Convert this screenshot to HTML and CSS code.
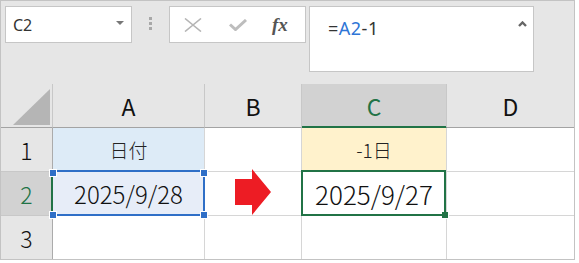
FILE: index.html
```html
<!DOCTYPE html>
<html lang="ja">
<head>
    <meta charset="UTF-8">
    <title>日付 -1日</title>
    <link rel="stylesheet" href="styles.css">
</head>
<body>
    <div class="sheet">
        <div class="toolbar">
            <div class="namebox">
                <span>C2</span>
                <svg class="drop" width="8" height="4" viewBox="0 0 8 4"><polygon points="0,0 8,0 4,4" fill="#777"/></svg>
            </div>
            <div class="grip"><i></i><i></i><i></i></div>
            <div class="fbuttons">
                <svg width="18" height="14" viewBox="0 0 18 14"><path d="M1 0.5 L17 13.5 M17 0.5 L1 13.5" stroke="#b5b5b5" stroke-width="1.6" fill="none"/></svg>
                <svg width="18" height="12" viewBox="0 0 18 12"><path d="M1 5.5 L6.5 10.5 L17 1" stroke="#bdbdbd" stroke-width="3" fill="none"/></svg>
                <span class="fx">fx</span>
            </div>
            <div class="formula">
                <span>=</span><span class="ref">A2</span><span>-1</span>
                <svg class="caret" width="9" height="6" viewBox="0 0 9 6"><path d="M1 5 L4.5 1.5 L8 5" stroke="#666" stroke-width="2.4" fill="none"/></svg>
            </div>
        </div>

        <div class="grid">
            <div class="corner">
                <svg width="37" height="36" viewBox="0 0 37 36"><polygon points="0,36 37,36 37,0" fill="#b5b5b5"/></svg>
            </div>
            <div class="colhead">A</div>
            <div class="colhead">B</div>
            <div class="colhead active">C</div>
            <div class="colhead last">D</div>

            <div class="rowhead">1</div>
            <div class="cell label-blue small">日付</div>
            <div class="cell"></div>
            <div class="cell label-yellow small">-1日</div>
            <div class="cell last"></div>

            <div class="rowhead active">2</div>
            <div class="cell source">2025/9/28<span class="sel-blue"><b class="h1"></b><b class="h2"></b><b class="h3"></b><b class="h4"></b></span></div>
            <div class="cell arrow">
                <svg width="36" height="46" viewBox="0 0 36 46"><polygon points="0,10 17,10 17,0 36,23 17,46 17,36 0,36" fill="#ed1c24"/></svg>
            </div>
            <div class="cell result">2025/9/27<span class="sel-green"><b></b></span></div>
            <div class="cell last"></div>

            <div class="rowhead bottom">3</div>
            <div class="cell bottom"></div>
            <div class="cell bottom"></div>
            <div class="cell bottom"></div>
            <div class="cell bottom last"></div>
        </div>
    </div>
</body>
</html>
```

FILE: styles.css
```css
* {
    box-sizing: border-box;
}
body {
    margin: 0;
    background: #fff;
    font-family: "Noto Sans CJK JP", "Noto Sans", sans-serif;
}
.sheet {
    width: 575px;
    height: 260px;
    border: 1px solid #c3c3c3;
    background: #e6e6e6;
}

/* barra de fórmulas */
.toolbar {
    height: 83px;
    display: flex;
    align-items: flex-start;
    padding: 5px 0 0 4px;
}
.namebox {
    width: 127px;
    height: 37px;
    background: #fff;
    border: 1px solid #c6c6c6;
    display: flex;
    align-items: center;
    justify-content: space-between;
    padding: 0 7px 0 7px;
    font-family: "Noto Sans", sans-serif;
    font-size: 16px;
    color: #333;
}
.namebox .drop {
    margin-top: -4px;
}
.grip {
    margin: 11px 0 0 17px;
    display: flex;
    flex-direction: column;
    gap: 2px;
}
.grip i {
    display: block;
    width: 3px;
    height: 3px;
    background: #a8a8a8;
}
.fbuttons {
    margin-left: 17px;
    width: 137px;
    height: 37px;
    background: #fff;
    border: 1px solid #c6c6c6;
    display: flex;
    align-items: center;
    padding-left: 14px;
    gap: 27px;
}
.fbuttons .fx {
    margin-left: -2px;
    font-family: "Liberation Serif", serif;
    font-style: italic;
    font-weight: bold;
    font-size: 19px;
    color: #555;
}
.formula {
    margin-left: 3px;
    width: 225px;
    height: 66px;
    background: #fff;
    border: 1px solid #c6c6c6;
    padding: 10px 0 0 18px;
    font-family: "Noto Sans", sans-serif;
    font-size: 18px;
    letter-spacing: 0.5px;
    color: #333;
    position: relative;
    line-height: 22px;
}
.formula .ref {
    color: #2e75d6;
}
.formula .caret {
    position: absolute;
    top: 14px;
    right: 6px;
}

/* hoja */
.grid {
    display: grid;
    grid-template-columns: 52px 152px 97px 145px 127px;
    grid-template-rows: 44px 44px 44px 43px;
    font-weight: 300;
}
.corner, .colhead, .rowhead, .cell {
    display: flex;
    align-items: center;
    justify-content: center;
}
.corner {
    border-right: 1px solid #c8c8c8;
    border-bottom: 1px solid #a3a3a3;
    padding: 3px 2px 0 11px;
}
.colhead {
    border-right: 1px solid #c8c8c8;
    border-bottom: 1px solid #a3a3a3;
    font-size: 23px;
    font-weight: 400;
    color: #111;
}
.colhead.active {
    background: #d2d2d2;
    color: #217346;
    box-shadow: inset 0 -1px #217346;
    border-bottom-color: #217346;
}
.rowhead {
    border-right: 1px solid #ababab;
    border-bottom: 1px solid #c8c8c8;
    font-size: 23px;
    color: #111;
}
.rowhead.active {
    background: #d2d2d2;
    color: #217346;
    border-right-color: #217346;
    box-shadow: inset -1px 0 #217346;
}
.cell {
    background: #fff;
    border-right: 1px solid #d6d6d6;
    border-bottom: 1px solid #d6d6d6;
    font-size: 24px;
    color: #111;
    position: relative;
}
.last {
    border-right: none;
}
.bottom {
    border-bottom: none;
}
.small {
    font-size: 19px;
    color: #222;
}
.label-blue {
    background: #ddebf7;
}
.label-yellow {
    background: #fff2cc;
}
.source {
    background: #e7edf8;
}
.result {
    font-size: 26px;
}
.arrow svg {
    margin: -3px 0 0 0;
}

/* selección */
.sel-blue, .sel-green {
    position: absolute;
    top: -2px;
    left: -1px;
    bottom: -1px;
    z-index: 2;
}
.sel-blue {
    right: -1px;
    border: 2px solid #2f6fc7;
    border-left: none;
}
.sel-blue b {
    position: absolute;
    width: 6px;
    height: 6px;
    background: #2f6fc7;
    outline: 1px solid #fff;
}
.sel-blue .h1 { top: -2px; left: -2px; }
.sel-blue .h2 { top: -2px; right: -4px; }
.sel-blue .h3 { bottom: -4px; left: -2px; }
.sel-blue .h4 { bottom: -4px; right: -4px; }
.sel-green {
    right: 0;
    border: 2px solid #217346;
}
.sel-green b {
    position: absolute;
    width: 7px;
    height: 7px;
    right: -5px;
    bottom: -5px;
    background: #217346;
    border: 1px solid #fff;
    border-top: none;
    border-left: none;
}
```
